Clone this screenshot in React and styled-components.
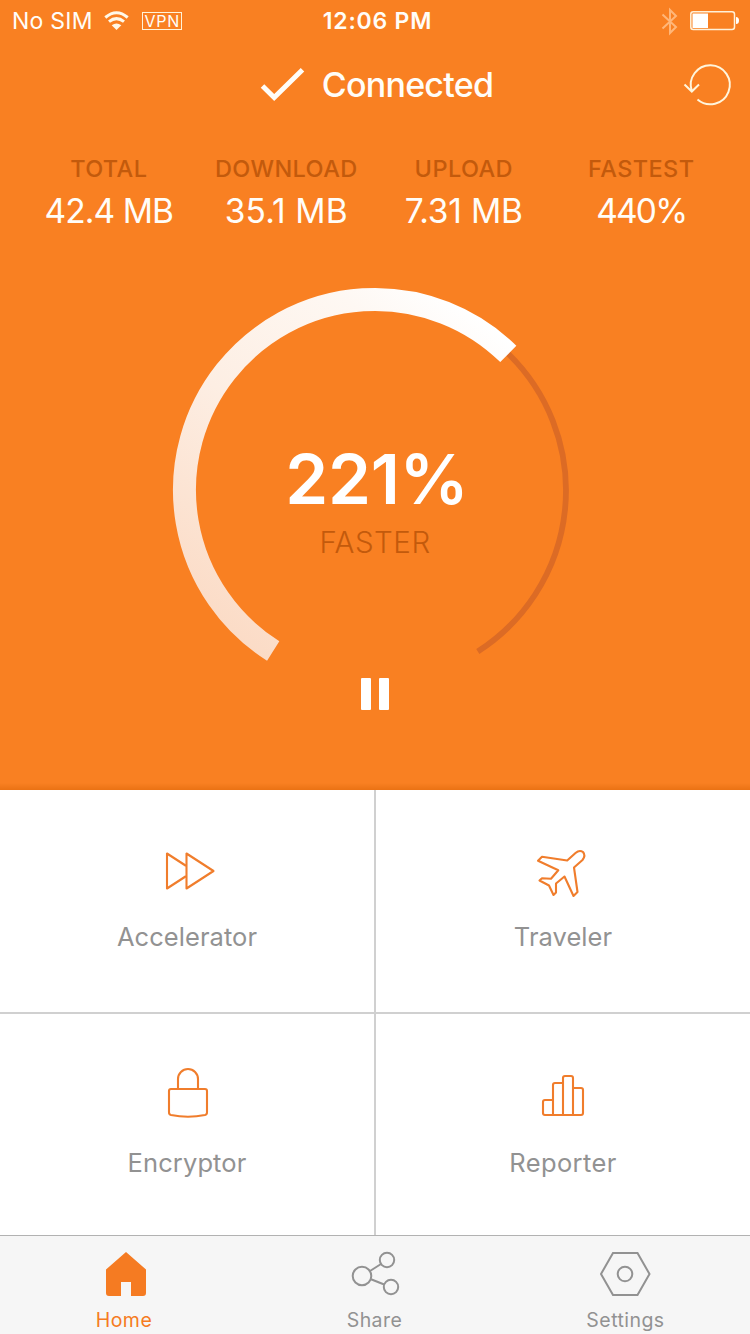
import React from "react";
import styled, { createGlobalStyle } from "styled-components";

const GlobalStyle = createGlobalStyle`
  * { box-sizing: border-box; }
  body { margin: 0; background: #fff; }
`;

const Screen = styled.div`
  width: 750px;
  height: 1334px;
  display: flex;
  flex-direction: column;
  overflow: hidden;
  font-family: Inter, "Liberation Sans", sans-serif;
  font-kerning: normal;
`;

const Hero = styled.section`
  height: 790px;
  display: flex;
  flex-direction: column;
  color: #fffdf8;
  background: linear-gradient(#f98022 0, #f98022 783px, #ea7214 790px);
`;

const Icon = styled.svg`
  display: block;
  flex: none;
  fill: none;
  overflow: visible;
`;

const StatusBar = styled.header`
  height: 41px;
  padding: 0 11px 0 12px;
  display: grid;
  grid-template-columns: 1fr auto 1fr;
  align-items: center;
`;

const StatusGroup = styled.div`
  display: flex;
  align-items: center;
  justify-content: ${(p) => p.$justify};
  gap: ${(p) => p.$gap}px;
`;

const Carrier = styled.span`
  font-size: 23px;
  line-height: 42px;
  letter-spacing: 0.25px;
`;

const Vpn = styled.span`
  width: 40px;
  height: 18px;
  border: 1px solid #fff3d8;
  font-size: 16px;
  line-height: 17px;
  text-align: center;
  letter-spacing: 0.7px;
  text-indent: 1px;
`;

const Clock = styled.span`
  font-size: 23px;
  line-height: 42px;
  font-weight: 600;
  letter-spacing: 0.8px;
  padding-left: 4px;
`;

const TitleBar = styled.div`
  height: 86px;
  padding: 1px 19px 0 23px;
  display: grid;
  grid-template-columns: 1fr auto 1fr;
  align-items: center;
`;

const ConnectionState = styled.div`
  grid-column: 2;
  display: flex;
  align-items: center;
  gap: 17px;
`;

const StateText = styled.h1`
  margin: 0;
  font-size: 34px;
  line-height: 40px;
  font-weight: 500;
  letter-spacing: -0.75px;
`;

const RefreshButton = styled.button`
  justify-self: end;
  padding: 2px 0 0;
  border: 0;
  background: none;
`;

const Stats = styled.dl`
  margin: 0;
  padding: 26px 20px 0;
  display: grid;
  grid-template-columns: repeat(4, 1fr);
`;

const Stat = styled.div`
  display: flex;
  flex-direction: column;
  align-items: center;
`;

const StatLabel = styled.dt`
  color: #c35a0c;
  font-size: 23.5px;
  line-height: 32px;
  font-weight: 500;
  letter-spacing: 0.4px;
  white-space: nowrap;
`;

const StatValue = styled.dd`
  margin: 0;
  padding-top: 6px;
  font-size: 33.5px;
  line-height: 40px;
  letter-spacing: ${(p) => p.$tracking}px;
  white-space: nowrap;
`;

const Gauge = styled.div`
  width: 404px;
  height: 376px;
  margin: 57px auto 0;
  display: grid;
  > * { grid-area: 1 / 1; }
`;

const GaugeText = styled.div`
  display: flex;
  flex-direction: column;
  align-items: center;
  padding-top: 151px;
`;

const GaugeValue = styled.strong`
  padding-left: 4px;
  font-size: 69px;
  line-height: 81px;
  font-weight: 600;
  letter-spacing: -0.3px;
  color: #fff;
`;

const GaugeLabel = styled.span`
  margin-top: 3px;
  font-size: 29.5px;
  line-height: 38px;
  font-weight: 350;
  letter-spacing: 0.5px;
  color: #c35a0c;
`;

const PauseButton = styled.button`
  margin: 14px auto 0;
  padding: 0;
  border: 0;
  background: none;
  display: flex;
  gap: 8px;
`;

const PauseBar = styled.span`
  width: 10px;
  height: 32px;
  border-radius: 1px;
  background: #fff;
`;

const Tiles = styled.main`
  height: 445px;
  display: grid;
  grid-template-columns: 374px 374px;
  grid-template-rows: 222px 221px;
  gap: 2px;
  background: #d0d0d0;
`;

const Tile = styled.a`
  display: flex;
  flex-direction: column;
  align-items: center;
  padding-top: 56px;
  background: #fff;
  color: #929292;
`;

const TileLabel = styled.span`
  margin-top: ${(p) => p.$gap}px;
  font-size: 25.5px;
  line-height: 32px;
  letter-spacing: ${(p) => p.$tracking}px;
`;

const TabBar = styled.nav`
  height: 99px;
  border-top: 1px solid #b2b2b2;
  background: #f6f6f6;
  display: grid;
  grid-template-columns: 248px 253px 249px;
`;

const Tab = styled.a`
  display: flex;
  flex-direction: column;
  align-items: center;
  padding-top: 14px;
  color: ${(p) => (p.$active ? "#f57b22" : "#929292")};
`;

const TabLabel = styled.span`
  margin-top: 8px;
  font-size: 19.5px;
  line-height: 28px;
  letter-spacing: 0.45px;
`;

const stats = [
  { label: "TOTAL", value: "42.4 MB", tracking: -0.9 },
  { label: "DOWNLOAD", value: "35.1 MB", tracking: 0.1 },
  { label: "UPLOAD", value: "7.31 MB", tracking: -0.2 },
  { label: "FASTEST", value: "440%", tracking: -1.8 },
];

const stroke = { stroke: "#f07d2c", strokeWidth: 2.1, strokeLinejoin: "round", strokeLinecap: "round" };

const tiles = [
  {
    label: "Accelerator",
    art: <><path d="M185.5 865.5 167 853.5V888.5L185.5 876.5" /><path d="M186.5 853.5V888.5L213.5 871Z" /></>,
    box: "157 846 60 50",
    tracking: 0.05,
    gap: 25,
  },
  {
    label: "Traveler",
    art: <path d="M538.5 860.8 542.5 856.8 567.7 860.5 576 853Q580 849.500 583.500 852Q586.500 855.500 583 860L574.500 867.500 578 892 574 896 565 876.500 556.500 883.500 556.500 892.500 554 895 549.500 885.500 540 880.500 542.500 878.200 551.500 878.800 558.800 870.300Z" />,
    box: "533.5 846 60 50",
    tracking: 0.05,
    gap: 25,
  },
  {
    label: "Encryptor",
    art: <><path d="M178 1089V1079a10 10 0 0 1 20 0V1089" /><path d="M171 1089H205Q207 1089 207 1091V1112.500Q207 1114.500 205 1115Q188 1118.500 171 1115Q169 1114.500 169 1112.500V1091Q169 1089 171 1089Z" /></>,
    box: "157 1070 60 50",
    tracking: 0.1,
    gap: 27,
  },
  {
    label: "Reporter",
    art: <><path d="M543 1102Q543 1100 545 1100H553V1085Q553 1083 555 1083H563V1078Q563 1076 565 1076H571Q573 1076 573 1078V1088H581Q583 1088 583 1090V1113Q583 1115 581 1115H545Q543 1115 543 1113Z" /><path d="M553 1100V1115M563 1083V1115M573 1088V1115" /></>,
    box: "533 1070 60 50",
    tracking: 0.4,
    gap: 27,
  },
];

const tabs = [
  {
    label: "Home",
    active: true,
    box: "94 1250 60 48",
    art: <path fill="#f57b22" d="M126 1252 146 1269.500V1293Q146 1296 143 1296H131V1282H121V1296H109Q106 1296 106 1293V1269.500Z" />,
  },
  {
    label: "Share",
    box: "345 1250 60 48",
    art: <g stroke="#929292" strokeWidth="2"><circle cx="362" cy="1276" r="9.300" /><circle cx="387" cy="1260" r="7.200" /><circle cx="391" cy="1287" r="7.200" /><path d="M370 1271 381 1264M371 1279.300 384.200 1284.500" /></g>,
  },
  {
    label: "Settings",
    box: "596 1250 60 48",
    art: <g stroke="#929292" strokeWidth="2"><path d="M601 1274 613 1253H637.500L649.500 1274 637.500 1295H613Z" /><circle cx="625" cy="1274" r="7.300" /></g>,
  },
];

export default function App() {
  return (
    <Screen>
      <GlobalStyle />
      <Hero>
        <StatusBar>
          <StatusGroup $justify="flex-start" $gap={12}>
            <Carrier>No SIM</Carrier>
            <Icon width="25" height="18" viewBox="105 11 25 18" stroke="#fff8e8" strokeWidth="3">
              <path d="M105.300 16.500Q116.500 7 127.700 16.500M109 20.700Q116.500 14.500 124 20.700" />
              <path d="M111.700 24.300Q116.500 20.500 121.300 24.300L116.500 29Z" fill="#fff8e8" stroke="none" />
            </Icon>
            <Vpn>VPN</Vpn>
          </StatusGroup>
          <Clock>12:06 PM</Clock>
          <StatusGroup $justify="flex-end" $gap={12}>
            <Icon width="16" height="27" viewBox="662 7 16 27" stroke="#ffb679" strokeWidth="2">
              <path d="M662.500 13.500 676 26 670 32V9L676 15 662.500 27.500" />
            </Icon>
            <Icon width="49" height="20" viewBox="690 11 49 20">
              <rect x="690.800" y="11.800" width="43.700" height="17.700" rx="2.500" stroke="#fff0d8" strokeWidth="1.500" />
              <rect x="692.500" y="13.500" width="15.500" height="14.500" fill="#fff" />
              <path d="M736 17Q739 17 739 20.500Q739 24 736 24Z" fill="#fff" />
            </Icon>
          </StatusGroup>
        </StatusBar>
        <TitleBar>
          <ConnectionState>
            <Icon width="44" height="34" viewBox="261 68 44 34" stroke="#fffdf8" strokeWidth="5">
              <path d="M262.500 86 274.200 97.500 302.500 69.700" />
            </Icon>
            <StateText>Connected</StateText>
          </ConnectionState>
          <RefreshButton aria-label="Refresh">
            <Icon width="48" height="42" viewBox="683 64 48 42" stroke="#fff5dc" strokeWidth="2">
              <path d="M691.800 90A19.500 19.500 0 1 1 697.500 98.500M684.500 83.500 691.800 90.500 699 83.500" />
            </Icon>
          </RefreshButton>
        </TitleBar>
        <Stats>
          {stats.map((s) => (
            <Stat key={s.label}>
              <StatLabel>{s.label}</StatLabel>
              <StatValue $tracking={s.tracking}>{s.value}</StatValue>
            </Stat>
          ))}
        </Stats>
        <Gauge>
          <Icon width="404" height="376" viewBox="173 288 404 376">
            <defs>
              <linearGradient id="progress" gradientUnits="userSpaceOnUse" x1="250" y1="665" x2="490" y2="325">
                <stop offset="0" stopColor="#fbdac4" />
                <stop offset="0.5" stopColor="#fdeee3" />
                <stop offset="0.85" stopColor="#fef8f3" />
                <stop offset="1" stopColor="#fff" />
              </linearGradient>
            </defs>
            <path d="M508 353.500A191 191 0 0 1 477.800 651.500" stroke="#dc6b25" strokeWidth="5.800" />
            <path d="M273.200 651A190.500 190.500 0 1 1 508.300 353.900" stroke="url(#progress)" strokeWidth="23" />
          </Icon>
          <GaugeText>
            <GaugeValue>221%</GaugeValue>
            <GaugeLabel>FASTER</GaugeLabel>
          </GaugeText>
        </Gauge>
        <PauseButton aria-label="Pause">
          <PauseBar />
          <PauseBar />
        </PauseButton>
      </Hero>
      <Tiles>
        {tiles.map((t) => (
          <Tile key={t.label}>
            <Icon width="60" height="50" viewBox={t.box} {...stroke}>{t.art}</Icon>
            <TileLabel $tracking={t.tracking} $gap={t.gap}>{t.label}</TileLabel>
          </Tile>
        ))}
      </Tiles>
      <TabBar>
        {tabs.map((t) => (
          <Tab key={t.label} $active={t.active}>
            <Icon width="60" height="48" viewBox={t.box}>{t.art}</Icon>
            <TabLabel>{t.label}</TabLabel>
          </Tab>
        ))}
      </TabBar>
    </Screen>
  );
}
